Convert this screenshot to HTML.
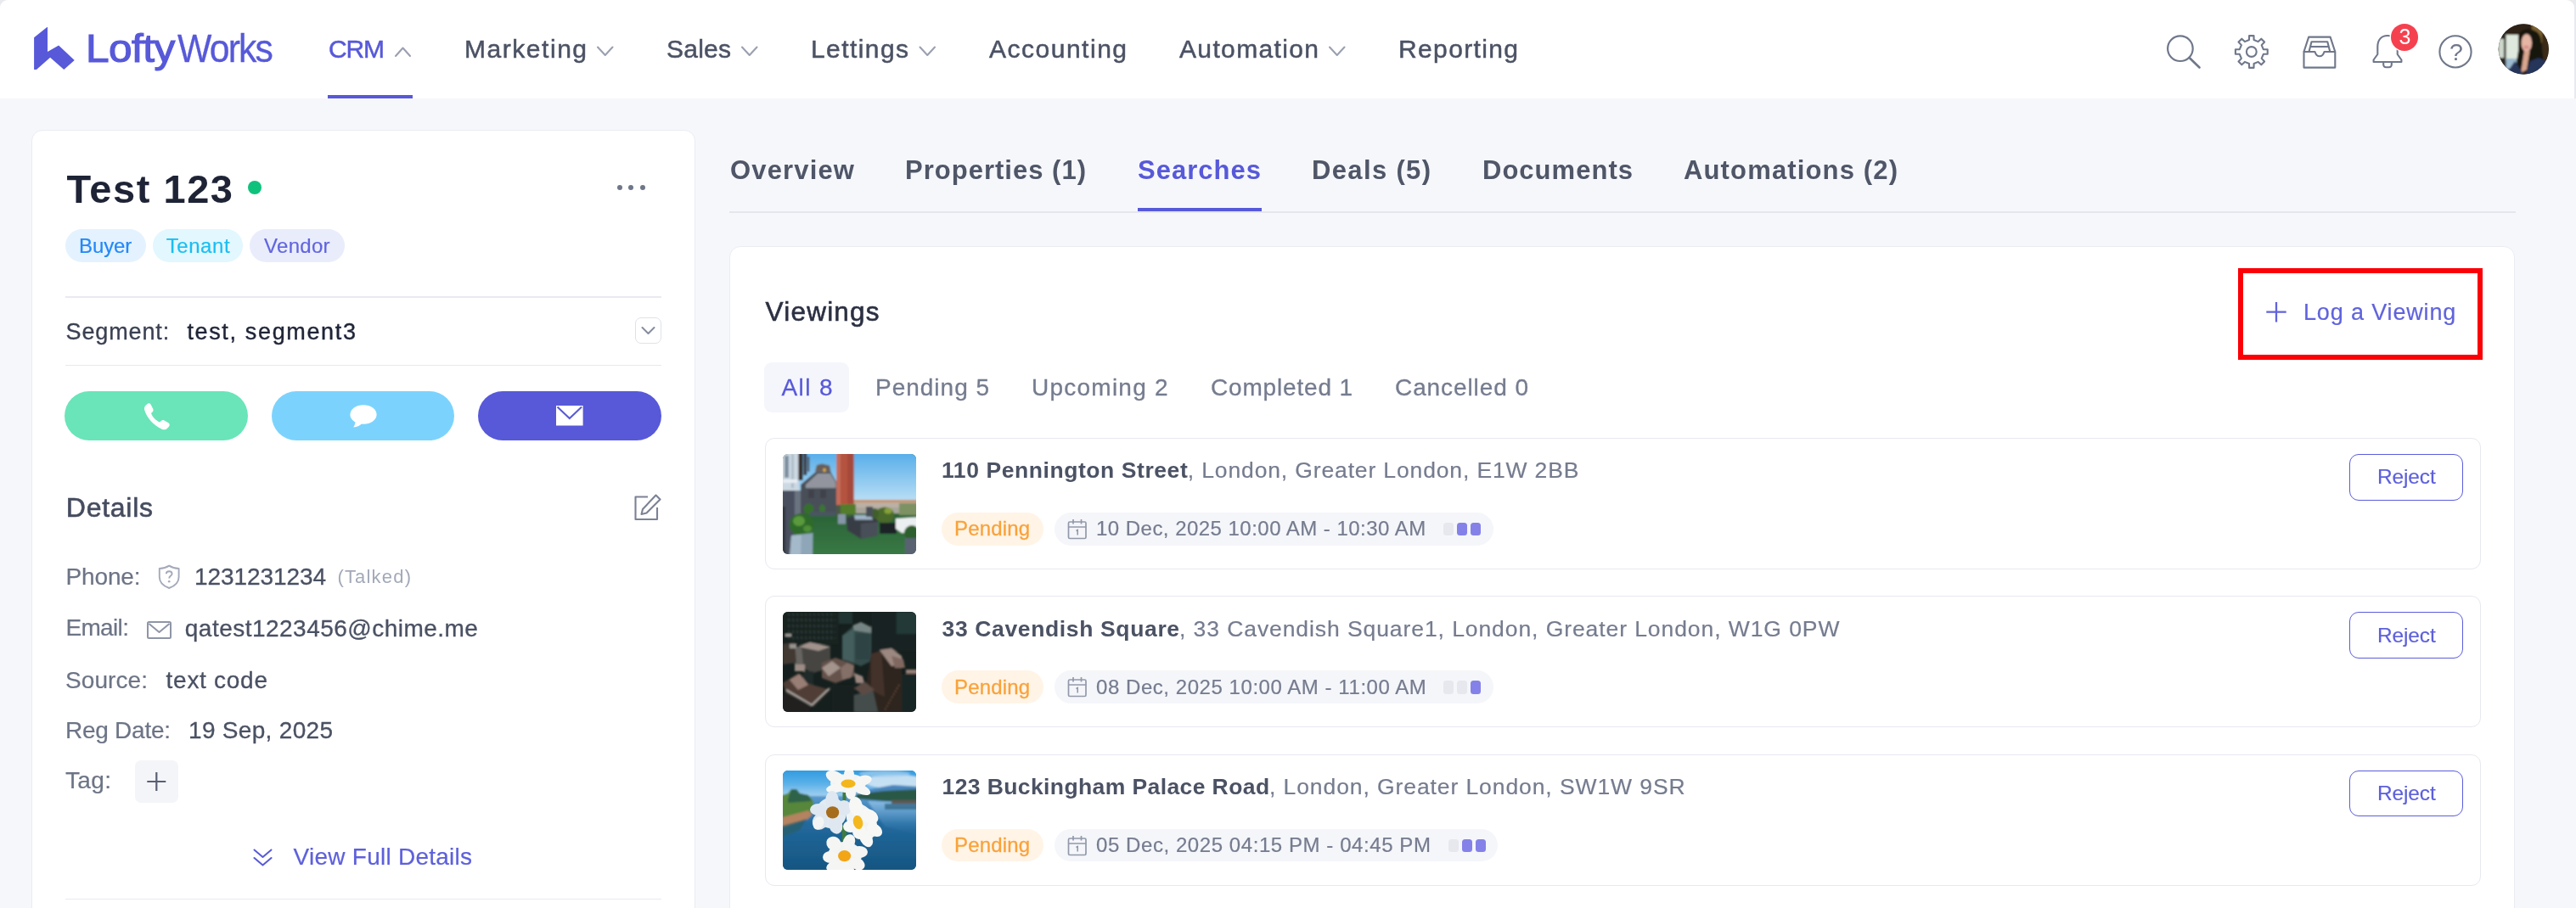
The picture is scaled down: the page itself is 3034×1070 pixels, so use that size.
<!DOCTYPE html>
<html lang="en"><head><meta charset="utf-8"><title>LoftyWorks CRM - Test 123 - Searches</title>
<style>
html,body{margin:0;padding:0}
body{width:3034px;height:1070px;position:relative;overflow:hidden;background:#f6f7fb;font-family:"Liberation Sans",sans-serif}
.abs,.t,svg{position:absolute}
.t{white-space:pre;line-height:1;display:block}
.card{position:absolute;background:#fff;border:1.5px solid #eaecf3;box-sizing:border-box}
.hr{position:absolute;height:1.6px;background:#e8eaf1}
.pill{position:absolute;border-radius:20px}
.vcard{position:absolute;left:900.5px;width:2021.5px;height:155px;border:1.5px solid #e7e9f0;border-radius:11px;box-sizing:border-box;background:#fff}
.thumb{position:absolute;left:921.5px;width:157.5px;height:117.6px;border-radius:6px;overflow:hidden}
.btn{position:absolute;top:460.5px;width:215.8px;height:58.8px;border-radius:30px}
.reject{position:absolute;left:2767px;width:133.5px;height:54.6px;border:1.8px solid #5b5ddb;border-radius:11px;box-sizing:border-box;background:#fff}
.dot{position:absolute;width:12px;height:15.5px;border-radius:3.5px}
#app{position:absolute;left:0;top:0;width:3034px;height:1070px;overflow:hidden;filter:blur(0.55px)}

</style></head>
<body>
<div id="app">
<div class="abs" style="left:0;top:0;width:3034px;height:115.5px;background:#e9eaee"></div>
<div class="abs" style="left:0;top:0;width:3032px;height:115.5px;background:#fff;border-radius:9px 9px 0 0"></div>
<svg style="left:0;top:0" width="340" height="115" viewBox="0 0 340 115"><polygon fill="#5759d9" points="40.1,44.2 55.4,32.1 56,32.1 56,60.9 69.1,53.5 87.7,70.9 75.3,82 59.1,67.8 43,82 40.1,82"/></svg>
<div class="abs" style="left:386px;top:111.5px;width:100px;height:4px;background:#5759d9"></div>
<svg style="left:0;top:0" width="1700" height="115" viewBox="0 0 1700 115"><polyline fill="none" stroke="#9aa0b0" stroke-width="2.1" stroke-linecap="round" stroke-linejoin="round" points="466,66 474.5,56.5 483,66"/><polyline fill="none" stroke="#9aa0b0" stroke-width="2.1" stroke-linecap="round" stroke-linejoin="round" points="704,55.5 712.75,65 721.5,55.5"/><polyline fill="none" stroke="#9aa0b0" stroke-width="2.1" stroke-linecap="round" stroke-linejoin="round" points="874,55.5 882.75,65 891.5,55.5"/><polyline fill="none" stroke="#9aa0b0" stroke-width="2.1" stroke-linecap="round" stroke-linejoin="round" points="1083.5,55.5 1092.25,65 1101.0,55.5"/><polyline fill="none" stroke="#9aa0b0" stroke-width="2.1" stroke-linecap="round" stroke-linejoin="round" points="1566,55.5 1574.75,65 1583.5,55.5"/></svg>
<svg style="left:0;top:0" width="3034" height="115" viewBox="0 0 3034 115"><circle cx="2567.9" cy="57.2" r="14.8" fill="none" stroke="#6f778a" stroke-width="2.2"/><line x1="2578.6" y1="68" x2="2590.5" y2="79.5" stroke="#6f778a" stroke-width="2.6" stroke-linecap="round"/><path d="M2649.0,47.0 L2649.1,42.1 L2654.5,42.1 L2654.6,47.0 L2659.7,49.1 L2663.3,45.7 L2667.1,49.5 L2663.7,53.1 L2665.8,58.2 L2670.7,58.3 L2670.7,63.7 L2665.8,63.8 L2663.7,68.9 L2667.1,72.5 L2663.3,76.3 L2659.7,72.9 L2654.6,75.0 L2654.5,79.9 L2649.1,79.9 L2649.0,75.0 L2643.9,72.9 L2640.3,76.3 L2636.5,72.5 L2639.9,68.9 L2637.8,63.8 L2632.9,63.7 L2632.9,58.3 L2637.8,58.2 L2639.9,53.1 L2636.5,49.5 L2640.3,45.7 L2643.9,49.1Z" fill="none" stroke="#6f778a" stroke-width="2.1" stroke-linejoin="round"/><circle cx="2651.8" cy="61.0" r="5.9" fill="none" stroke="#6f778a" stroke-width="2.1"/><g fill="none" stroke="#6f778a" stroke-width="2.1" stroke-linejoin="round"><path d="M2713.5,61 H2726.5 C2727.5,64.5 2729,66.3 2732,66.3 C2735,66.3 2736.5,64.5 2737.5,61 H2750.3 V79.6 H2713.5 Z"/><path d="M2713.5,61 L2719.2,43.6 H2744.6 L2750.3,61"/><path d="M2719.5,61 L2722.5,49.2 H2741.3 L2744.3,61"/><path d="M2721.5,55 H2742.3"/></g><g fill="none" stroke="#6f778a" stroke-width="2.1" stroke-linejoin="round"><path d="M2812,42 C2804.5,42 2800.3,47.5 2800.3,55 V64 L2795.6,70.5 V73 H2828.4 V70.5 L2823.7,64 V55 C2823.7,47.5 2819.5,42 2812,42 Z"/><path d="M2807.2,74 V76.3 C2807.2,78 2808.6,79.3 2810.2,79.3 H2813.8 C2815.4,79.3 2816.8,78 2816.8,76.3 V74"/></g><circle cx="2832" cy="43.9" r="17.5" fill="#fff"/><circle cx="2832" cy="43.9" r="16" fill="#f5414f"/><circle cx="2892" cy="60.9" r="18.6" fill="none" stroke="#6f778a" stroke-width="2.1"/><defs><clipPath id="av"><circle cx="2972.2" cy="57.9" r="29.7"/></clipPath><filter id="b1"><feGaussianBlur stdDeviation="1.1"/></filter></defs><circle cx="2972.2" cy="57.9" r="29.5" fill="#2a2017"/><g clip-path="url(#av)"><g filter="url(#b1)"><rect x="2940" y="25" width="66" height="66" fill="#2d2116"/><rect x="2982" y="26" width="14" height="24" fill="#7d6230"/><rect x="2994" y="34" width="10" height="40" fill="#3a2a18"/><rect x="2940" y="30" width="12" height="60" fill="#2b2a20"/><rect x="2951.5" y="41" width="15.5" height="30" fill="#dfe8dd"/><rect x="2951.5" y="69" width="15.5" height="12" fill="#9bb9cf"/><rect x="2942.5" y="46" width="6.5" height="22" fill="#cdd7ca"/><path d="M2966,44 C2966,30 2994,30 2993,50 L2996,74 L2988,80 L2962,84 L2966,60 Z" fill="#19120f"/><ellipse cx="2975.8" cy="50.5" rx="6.2" ry="10.6" fill="#e6b6a5"/><ellipse cx="2975.5" cy="55.5" rx="3.2" ry="2" fill="#d98f88"/><path d="M2973,60 L2979.5,60 L2976,82 L2969,86 Z" fill="#d9a68f"/><path d="M2948,92 L2962,72 L2970,84 L2974,90 L2980,72 L2990,68 L3003,74 L3004,92 Z" fill="#25355a"/></g></g></svg>
<div class="card" style="left:36.5px;top:152.6px;width:782.5px;height:940px;border-radius:13px"></div>
<div class="abs" style="left:291.7px;top:212.9px;width:16.3px;height:16.3px;border-radius:50%;background:#0fc27c"></div>
<div class="abs" style="left:726.8px;top:218px;width:6px;height:6px;border-radius:50%;background:#6f7688"></div>
<div class="abs" style="left:740.4px;top:218px;width:6px;height:6px;border-radius:50%;background:#6f7688"></div>
<div class="abs" style="left:754.0px;top:218px;width:6px;height:6px;border-radius:50%;background:#6f7688"></div>
<div class="pill" style="left:76.7px;top:270.1px;width:95.3px;height:39.3px;background:#e4f2ff"></div>
<div class="pill" style="left:180px;top:270.1px;width:106.4px;height:39.3px;background:#e2f7fe"></div>
<div class="pill" style="left:294px;top:270.1px;width:111.6px;height:39.3px;background:#e9edfb"></div>
<div class="hr" style="left:76.5px;top:349px;width:702px"></div>
<div class="hr" style="left:76.5px;top:429.5px;width:702px"></div>
<div class="hr" style="left:76.5px;top:1058.5px;width:702px"></div>
<div class="abs" style="left:747.5px;top:373.6px;width:31px;height:31px;border:1.5px solid #dfe2ea;border-radius:7px;box-sizing:border-box"></div>
<svg style="left:747.5px;top:373.6px" width="31" height="31" viewBox="0 0 31 31"><polyline points="8.5,12 15.5,19 22.5,12" fill="none" stroke="#858c9d" stroke-width="2" stroke-linecap="round" stroke-linejoin="round"/></svg>
<div class="btn" style="left:76.4px;background:#69e5b9"></div>
<div class="btn" style="left:319.5px;background:#7bd3fd"></div>
<div class="btn" style="left:562.8px;background:#5759d9"></div>
<svg style="left:168.6px;top:474.5px" width="32" height="32" viewBox="0 0 32 32"><path d="M4.2,1.2 C5.6,-0.2 8,0.2 8.8,1.9 L11.3,7 C11.9,8.3 11.6,9.7 10.6,10.6 L9,12.1 C10.6,16.4 14.3,20.6 19.2,22.6 L20.8,20.9 C21.8,19.9 23.3,19.7 24.5,20.4 L29.3,23.3 C30.9,24.3 31.2,26.5 29.9,27.8 L28,29.7 C26.3,31.4 23.7,31.7 21.6,30.7 C11.5,26.1 4.3,17.7 1.3,8.5 C0.6,6.4 1.1,4.2 2.6,2.8 Z" fill="#fff"/></svg>
<svg style="left:411.9px;top:476.8px" width="32" height="27" viewBox="0 0 32 27"><ellipse cx="16" cy="11.5" rx="15.6" ry="11.3" fill="#fff"/><path d="M6.5,17 C7,21 6,24 4.2,26.4 C9,26.2 12.5,24.4 14.5,21.5 Z" fill="#fff"/></svg>
<svg style="left:654.7px;top:478px" width="32" height="24" viewBox="0 0 32 24"><rect x="0" y="0" width="31.6" height="23.5" fill="#fff"/><polyline points="1.5,1.5 15.8,15 30.1,1.5" fill="none" stroke="#5759d9" stroke-width="2"/></svg>
<svg style="left:746px;top:580px" width="36" height="36" viewBox="0 0 36 36"><path d="M17,5.5 H2.5 V32 H28 V18" fill="none" stroke="#7b8294" stroke-width="2.1" stroke-linejoin="round"/><path d="M26.5,3.5 L31.5,8.5 L15.5,24.5 L9.5,26 L11,20 Z" fill="#fff" stroke="#7b8294" stroke-width="2.1" stroke-linejoin="round"/></svg>
<svg style="left:185px;top:664px" width="30" height="32" viewBox="0 0 30 32"><path d="M14.2,2.6 C10.5,5 6.5,5.8 2.8,6 V16 C2.8,22.5 8,26.8 14.2,29 C20.4,26.8 25.6,22.5 25.6,16 V6 C21.9,5.8 17.9,5 14.2,2.6 Z" fill="none" stroke="#a4aaba" stroke-width="1.9" stroke-linejoin="round"/><path d="M10.8,12.3 C10.8,10.3 12.3,9.2 14.2,9.2 C16.1,9.2 17.6,10.4 17.6,12.2 C17.6,14.6 14.2,14.6 14.2,17.6" fill="none" stroke="#a4aaba" stroke-width="1.9"/><circle cx="14.2" cy="21.3" r="1.3" fill="#a4aaba"/></svg>
<svg style="left:172px;top:730px" width="32" height="26" viewBox="0 0 32 26"><rect x="2" y="3" width="27" height="19" rx="1.5" fill="none" stroke="#8e95a6" stroke-width="2"/><polyline points="3.5,5 15.5,15 27.5,5" fill="none" stroke="#8e95a6" stroke-width="2" stroke-linejoin="round"/></svg>
<div class="abs" style="left:159px;top:896px;width:50.6px;height:50px;border-radius:7px;background:#f4f5f9"></div>
<svg style="left:159px;top:896px" width="51" height="50" viewBox="0 0 51 50"><path d="M25.3,14 V36 M14.3,25 H36.3" stroke="#596073" stroke-width="2.2" fill="none"/></svg>
<svg style="left:296px;top:997.2px" width="28" height="28" viewBox="0 0 28 28"><polyline points="3.5,4.5 13.5,13 23.5,4.5" fill="none" stroke="#5759d9" stroke-width="2" stroke-linejoin="round" stroke-linecap="round"/><polyline points="3.5,14 13.5,22.5 23.5,14" fill="none" stroke="#5759d9" stroke-width="2" stroke-linejoin="round" stroke-linecap="round"/></svg>
<div class="abs" style="left:859px;top:248.5px;width:2104px;height:2px;background:#e4e6ed"></div>
<div class="abs" style="left:1340px;top:244.5px;width:146px;height:4.5px;background:#5759d9"></div>
<div class="card" style="left:859.3px;top:290px;width:2103px;height:820px;border-radius:13px"></div>
<div class="abs" style="left:900px;top:427px;width:99.6px;height:58.5px;border-radius:9px;background:#f5f6fb"></div>
<div class="abs" style="left:2635.8px;top:316px;width:288.2px;height:108px;border:6.5px solid #fb0007;box-sizing:border-box"></div>
<svg style="left:2666px;top:353px" width="30" height="30" viewBox="0 0 30 30"><path d="M15,3 V26.5 M3.3,14.6 H26.7" stroke="#6063dc" stroke-width="2.3" fill="none"/></svg>
<div class="vcard" style="top:516.0px"></div>
<div class="pill" style="left:1108.5px;top:604.0px;width:120.5px;height:38.7px;background:#fff4e6"></div>
<div class="pill" style="left:1241.5px;top:604.0px;width:517.1px;height:38.7px;background:#f5f6fa"></div>
<svg style="left:1256px;top:610.0px" width="26" height="28" viewBox="0 0 26 28"><rect x="2.5" y="5" width="20.5" height="19.5" rx="1.5" fill="none" stroke="#9299aa" stroke-width="1.7"/><path d="M2.5,11 H23 M8,2 V7.5 M17.5,2 V7.5" stroke="#9299aa" stroke-width="1.7" fill="none"/><path d="M11.5,15.5 L13.2,14.5 V20.5" stroke="#8e95a6" stroke-width="1.5" fill="none"/></svg>
<div class="dot" style="left:1700.0px;top:615.7px;background:#e6e8ee"></div>
<div class="dot" style="left:1715.9px;top:615.7px;background:#8482e8"></div>
<div class="dot" style="left:1731.8px;top:615.7px;background:#8482e8"></div>
<div class="reject" style="top:535.0px"></div>
<div class="vcard" style="top:702.4px"></div>
<div class="pill" style="left:1108.5px;top:790.4px;width:120.5px;height:38.7px;background:#fff4e6"></div>
<div class="pill" style="left:1241.5px;top:790.4px;width:517.1px;height:38.7px;background:#f5f6fa"></div>
<svg style="left:1256px;top:796.4px" width="26" height="28" viewBox="0 0 26 28"><rect x="2.5" y="5" width="20.5" height="19.5" rx="1.5" fill="none" stroke="#9299aa" stroke-width="1.7"/><path d="M2.5,11 H23 M8,2 V7.5 M17.5,2 V7.5" stroke="#9299aa" stroke-width="1.7" fill="none"/><path d="M11.5,15.5 L13.2,14.5 V20.5" stroke="#8e95a6" stroke-width="1.5" fill="none"/></svg>
<div class="dot" style="left:1700.0px;top:802.1px;background:#e6e8ee"></div>
<div class="dot" style="left:1715.9px;top:802.1px;background:#e6e8ee"></div>
<div class="dot" style="left:1731.8px;top:802.1px;background:#8482e8"></div>
<div class="reject" style="top:721.4px"></div>
<div class="vcard" style="top:888.8px"></div>
<div class="pill" style="left:1108.5px;top:976.8px;width:120.5px;height:38.7px;background:#fff4e6"></div>
<div class="pill" style="left:1241.5px;top:976.8px;width:522.5px;height:38.7px;background:#f5f6fa"></div>
<svg style="left:1256px;top:982.8px" width="26" height="28" viewBox="0 0 26 28"><rect x="2.5" y="5" width="20.5" height="19.5" rx="1.5" fill="none" stroke="#9299aa" stroke-width="1.7"/><path d="M2.5,11 H23 M8,2 V7.5 M17.5,2 V7.5" stroke="#9299aa" stroke-width="1.7" fill="none"/><path d="M11.5,15.5 L13.2,14.5 V20.5" stroke="#8e95a6" stroke-width="1.5" fill="none"/></svg>
<div class="dot" style="left:1705.7px;top:988.5px;background:#e6e8ee"></div>
<div class="dot" style="left:1721.6px;top:988.5px;background:#8482e8"></div>
<div class="dot" style="left:1737.5px;top:988.5px;background:#8482e8"></div>
<div class="reject" style="top:907.8px"></div>
<div class="thumb" style="top:535.0px"><svg width="158" height="118" viewBox="0 0 158 118" style="left:0;top:0"><defs><linearGradient id="sky1" x1="0" y1="0" x2="0" y2="1"><stop offset="0" stop-color="#52abe9"/><stop offset="1" stop-color="#bfe1f6"/></linearGradient><linearGradient id="gr1" x1="0" y1="0" x2="0" y2="1"><stop offset="0" stop-color="#2a6236"/><stop offset="1" stop-color="#3a7b47"/></linearGradient><filter id="bl"><feGaussianBlur stdDeviation="0.8"/></filter></defs><rect width="158" height="118" fill="#4a6a55"/><g filter="url(#bl)"><rect x="-4" y="-4" width="166" height="62" fill="url(#sky1)"/><rect x="83" y="54" width="80" height="22" fill="#a9a59a"/><rect x="83" y="54" width="80" height="3" fill="#c9935f"/><rect x="83" y="57" width="80" height="6" fill="#bcb0a6"/><rect x="-4" y="70" width="166" height="52" fill="url(#gr1)"/><rect x="-4" y="-4" width="23" height="48" fill="#ccd8e2"/><rect x="2" y="2" width="5" height="26" fill="#7e90a0"/><rect x="10" y="0" width="3" height="40" fill="#aebdca"/><rect x="0" y="30" width="17" height="4" fill="#e8eef3"/><rect x="18.5" y="-2" width="5" height="33" fill="#2f2621"/><rect x="24.6" y="-2" width="3.6" height="27" fill="#3a2b24"/><rect x="29.2" y="3" width="2" height="18" fill="#4a3a31"/><polygon points="21,36 39.5,20.5 56,20.5 63,33 63,72 21,72" fill="#4a4f59"/><polygon points="27,36 41,23 56,23 62.5,34 62.5,40 27,40" fill="#92959d"/><polygon points="38,20.5 40,13 46,11.5 55,13.5 56.5,20.5" fill="#6b5e59"/><rect x="47.5" y="17" width="3" height="4" fill="#e0a94a"/><rect x="30" y="42" width="7" height="10" fill="#3f434c"/><rect x="44" y="42" width="7" height="10" fill="#3f434c"/><rect x="63" y="-4" width="20.5" height="65" fill="#b4523f"/><rect x="63" y="-4" width="5" height="65" fill="#c46a58"/><rect x="76" y="-4" width="7.5" height="65" fill="#a64a3a"/><rect x="63" y="60" width="21" height="12" fill="#4b5a45"/><rect x="-4" y="43" width="18.5" height="80" fill="#48505e"/><rect x="-4" y="62" width="7" height="56" fill="#2f3540"/><rect x="14" y="43" width="7" height="30" fill="#6b7380"/><ellipse cx="30.5" cy="65" rx="6" ry="6.5" fill="#346f2c"/><ellipse cx="46.5" cy="64.5" rx="3.5" ry="5" fill="#3a7530"/><rect x="32" y="68" width="30" height="5" fill="#4a5560"/><ellipse cx="22" cy="83" rx="14.5" ry="13" fill="#2f6a2a"/><ellipse cx="19" cy="79" rx="7" ry="6" fill="#5a9a3e"/><ellipse cx="29" cy="88" rx="5" ry="4" fill="#4f8f38"/><polygon points="10,96 35.5,93 35,122 8,122" fill="#8ea6b8"/><polygon points="10,96 22,95 21,122 8,122" fill="#a4b9c9"/><rect x="65" y="71" width="9" height="11.5" fill="#8796a8"/><rect x="68" y="59" width="18" height="12" fill="#527d2c"/><polygon points="75,75 84,73 104,73 112,77 112,96 92,100 76,90" fill="#383c45"/><polygon points="84,72 104,72 106,77.5 85,77.5" fill="#9fb4c8"/><polygon points="92,82 112,80 112,96 92,100" fill="#4a4f59"/><ellipse cx="120" cy="72" rx="11" ry="9.5" fill="#4a6b2a"/><ellipse cx="124" cy="67" rx="4.5" ry="3.5" fill="#85a03a"/><ellipse cx="108" cy="70" rx="5" ry="6" fill="#3f5f2c"/><rect x="98" y="62" width="8" height="12" fill="#4a4f58"/><rect x="137" y="58" width="26" height="14" fill="#7d9163"/><rect x="114" y="81" width="20" height="13" fill="#1f2226"/><polygon points="133,76 162,74 162,92 140,93 133,88" fill="#eceff1"/><ellipse cx="152" cy="93" rx="9" ry="9" fill="#2f5f2e"/><rect x="144" y="99" width="18" height="23" fill="#596270"/></g></svg></div>
<div class="thumb" style="top:721.4px"><svg width="158" height="118" viewBox="0 0 158 118" style="left:0;top:0"><defs><filter id="bl2"><feGaussianBlur stdDeviation="1.0"/></filter><pattern id="win" width="5" height="7" patternUnits="userSpaceOnUse"><rect x="1.5" y="1" width="1.3" height="3.5" fill="#4b5f5c" opacity="0.8"/></pattern></defs><rect width="158" height="118" fill="#18221f"/><g filter="url(#bl2)"><rect x="0" y="0" width="66" height="38" fill="#1a2624"/><rect x="4" y="2" width="58" height="34" fill="url(#win)"/><rect x="104" y="0" width="54" height="46" fill="#1a2826"/><rect x="134" y="0" width="24" height="26" fill="#2c4644"/><rect x="66" y="0" width="16" height="14" fill="#2b3f3d"/><polygon points="70,28 84,16 104,22 104,58 92,64 70,56" fill="#446160"/><polygon points="70,28 84,20 84,60 70,56" fill="#5a7b7a"/><polygon points="82.5,16 92,12 104,18 104,25 84,22" fill="#a3b4b0"/><rect x="86" y="26" width="16" height="30" fill="#3b5756"/><polygon points="14,42 32,36 56,41 56,66 36,72 14,62" fill="#5d5853"/><polygon points="18,41 32,36 56,41 42,46" fill="#e0c6bd"/><polygon points="14,42 22,41 24,62 14,62" fill="#8d8580"/><polygon points="0,38 14,36 16,60 0,62" fill="#57463e"/><rect x="3" y="26" width="7" height="3" fill="#d9cfc8"/><rect x="8" y="38" width="8" height="5" fill="#d0c8c2"/><polygon points="46,60 62,54 84,62 84,76 62,84 46,78" fill="#8a6a60"/><polygon points="46,66 58,58 68,66 54,76" fill="#e2c9be"/><polygon points="68,66 76,60 84,64 80,78 70,80" fill="#b8958a"/><polygon points="84,72 94,76 96,84 86,84" fill="#d9b8ad"/><rect x="14" y="62" width="12" height="8" fill="#d8bdb3"/><rect x="24" y="70" width="12" height="20" fill="#253331"/><polygon points="0,84 18,72 28,84 56,92 36,112 4,96" fill="#6a4d42"/><polygon points="8,80 20,73 30,86 18,92" fill="#d3a99c"/><polyline points="4,92 34,110 55,90" fill="none" stroke="#e6dad4" stroke-width="2.2"/><polygon points="0,96 34,112 30,118 0,118" fill="#2a2422"/><polygon points="104,48 122,44 140,54 140,118 112,118 98,88" fill="#3b2a24"/><polygon points="104,50 116,46 120,100 104,92" fill="#5a3d33"/><polygon points="114,45 128,43 140,52 142,62 128,64" fill="#d9b8ad"/><polygon points="128,52 142,56 144,66 132,66" fill="#b08a7e"/><rect x="145" y="68" width="13" height="5" fill="#d2ab9e"/><rect x="140" y="74" width="18" height="44" fill="#1b2b2a"/><line x1="137" y1="86" x2="120" y2="116" stroke="#a0684f" stroke-width="1.5" stroke-dasharray="1.5 2.5"/><polygon points="84,98 106,92 112,118 84,118" fill="#5c6362"/><polygon points="84,90 96,82 108,92 94,98" fill="#7d6156"/><rect x="58" y="86" width="26" height="32" fill="#1d2422"/></g><rect width="158" height="118" fill="#121c1a" opacity="0.3"/></svg></div>
<div class="thumb" style="top:907.8px"><svg width="158" height="118" viewBox="0 0 158 118" style="left:0;top:0"><defs><linearGradient id="sky3" x1="0" y1="0" x2="0" y2="1"><stop offset="0" stop-color="#2696de"/><stop offset="0.5" stop-color="#59b0e8"/><stop offset="1" stop-color="#b5d8f1"/></linearGradient><linearGradient id="wat" x1="0" y1="0" x2="0" y2="1"><stop offset="0" stop-color="#5b9bd0"/><stop offset="0.35" stop-color="#22699d"/><stop offset="1" stop-color="#15547f"/></linearGradient><linearGradient id="wat2" x1="0" y1="0" x2="0" y2="1"><stop offset="0" stop-color="#8fc0e6" stop-opacity="0.9"/><stop offset="1" stop-color="#3f86be" stop-opacity="0"/></linearGradient><filter id="bl3"><feGaussianBlur stdDeviation="1.1"/></filter><filter id="bl3b"><feGaussianBlur stdDeviation="0.7"/></filter></defs><rect width="158" height="118" fill="#1f6596"/><g filter="url(#bl3)"><rect x="-4" y="-4" width="166" height="38" fill="url(#sky3)"/><ellipse cx="132" cy="13" rx="36" ry="8" fill="#d9e9f5" opacity="0.85"/><ellipse cx="120" cy="4" rx="30" ry="4" fill="#a8d0ee" opacity="0.7"/><polygon points="92,24 130,17 162,19 162,30 92,30" fill="#4a86bd"/><rect x="-4" y="30" width="166" height="92" fill="url(#wat)"/><polygon points="100,36 162,38 162,76 120,66" fill="url(#wat2)"/><polygon points="86,28 120,24 162,22 162,37 120,36 86,33" fill="#2b5846"/><rect x="128" y="35" width="34" height="4" fill="#5f5852"/><rect x="120" y="39" width="42" height="7" fill="#2a5f7c" opacity="0.7"/><rect x="-4" y="29" width="34" height="5" fill="#245a7c"/><polygon points="-4,30 6,27 10,22 16,22 20,27 30,29 36,36 36,46 28,56 -4,66" fill="#57873a"/><polygon points="6,34 10,22 16,22 20,27 30,29 34,36 6,38" fill="#2f624a"/><polygon points="-4,56 30,47 35,52 28,58 -4,69" fill="#b5835f"/><polygon points="-4,66 28,57 20,70 -4,80" fill="#2a5f6c" opacity="0.8"/></g><g filter="url(#bl3b)"><rect x="70.5" y="22" width="4" height="16" fill="#3f7a3a"/><rect x="70" y="64" width="5" height="22" fill="#3f7a3a"/><g fill="#f1f4f4"><ellipse cx="77" cy="15" rx="21" ry="11"/><ellipse cx="57" cy="50" rx="18" ry="18" fill="#e3ebf2"/><ellipse cx="93" cy="60" rx="16" ry="23" transform="rotate(-32 93 60)"/><ellipse cx="73" cy="100" rx="20" ry="16"/></g><g fill="#f6f7f5"><ellipse cx="62" cy="8" rx="12" ry="7" transform="rotate(25 62 8)"/><ellipse cx="78" cy="5" rx="6" ry="9"/><ellipse cx="94" cy="12" rx="11" ry="6" transform="rotate(-15 94 12)"/><ellipse cx="62" cy="21" rx="11" ry="5" transform="rotate(-10 62 21)"/><ellipse cx="92" cy="22" rx="12" ry="5.5" transform="rotate(25 92 22)"/><ellipse cx="80" cy="26" rx="6" ry="8"/></g><ellipse cx="77" cy="15.5" rx="8.5" ry="5" fill="#f3b61f"/><g fill="#dfe8f1"><ellipse cx="58" cy="36" rx="8" ry="12"/><ellipse cx="42" cy="46" rx="10" ry="7"/><ellipse cx="44" cy="60" rx="9" ry="10" transform="rotate(30 44 60)"/><ellipse cx="62" cy="64" rx="8" ry="11" transform="rotate(-20 62 64)"/><ellipse cx="72" cy="44" rx="9" ry="9"/></g><g fill="#f3f5f4"><ellipse cx="42" cy="62" rx="6" ry="8" transform="rotate(25 42 62)"/></g><ellipse cx="58.6" cy="49.4" rx="7.6" ry="7.2" fill="#a66d1c"/><g fill="#f7f8f6"><ellipse cx="86" cy="42" rx="8" ry="11" transform="rotate(-10 86 42)"/><ellipse cx="102" cy="54" rx="11" ry="8" transform="rotate(30 102 54)"/><ellipse cx="108" cy="70" rx="10" ry="7" transform="rotate(35 108 70)"/><ellipse cx="98" cy="80" rx="7" ry="11" transform="rotate(-30 98 80)"/><ellipse cx="80" cy="66" rx="9" ry="7"/><ellipse cx="90" cy="72" rx="8" ry="9"/></g><ellipse cx="88.5" cy="61" rx="5.6" ry="8.2" fill="#f4b81f" transform="rotate(-15 88.5 61)"/><g fill="#f5f6f4"><ellipse cx="60" cy="86" rx="9" ry="8" transform="rotate(30 60 86)"/><ellipse cx="78" cy="84" rx="7" ry="9" transform="rotate(20 78 84)"/><ellipse cx="90" cy="96" rx="10" ry="7"/><ellipse cx="56" cy="102" rx="9" ry="7"/><ellipse cx="60" cy="113" rx="9" ry="6" transform="rotate(-20 60 113)"/><ellipse cx="88" cy="110" rx="9" ry="7" transform="rotate(30 88 110)"/><ellipse cx="74" cy="116" rx="10" ry="7"/></g><ellipse cx="72.6" cy="100.6" rx="7.6" ry="6.6" fill="#f2a519"/></g></svg></div>
<div id="texts">
<span class="t" style="left:100.5px;top:34.1px;font-size:46px;letter-spacing:-0.50px;color:#5759d9;transform:scaleX(1.0774);transform-origin:0 0;-webkit-text-stroke:1.2px #5759d9;">Lofty</span>
<span class="t" style="left:208.6px;top:34.1px;font-size:46px;letter-spacing:-2.00px;color:#5759d9;transform:scaleX(0.9292);transform-origin:0 0;-webkit-text-stroke:0.3px #5759d9;">Works</span>
<span class="t" style="left:387.0px;top:42.5px;font-size:30px;letter-spacing:-1.16px;color:#5759d9;-webkit-text-stroke:0.5px #5759d9;">CRM</span>
<span class="t" style="left:547.0px;top:42.5px;font-size:30px;letter-spacing:1.54px;color:#4b5264;-webkit-text-stroke:0.5px #4b5264;">Marketing</span>
<span class="t" style="left:785.0px;top:42.5px;font-size:30px;letter-spacing:0.24px;color:#4b5264;-webkit-text-stroke:0.5px #4b5264;">Sales</span>
<span class="t" style="left:955.0px;top:42.5px;font-size:30px;letter-spacing:1.42px;color:#4b5264;-webkit-text-stroke:0.5px #4b5264;">Lettings</span>
<span class="t" style="left:1165.0px;top:42.5px;font-size:30px;letter-spacing:1.51px;color:#4b5264;-webkit-text-stroke:0.5px #4b5264;">Accounting</span>
<span class="t" style="left:1389.0px;top:42.5px;font-size:30px;letter-spacing:1.36px;color:#4b5264;-webkit-text-stroke:0.5px #4b5264;">Automation</span>
<span class="t" style="left:1647.0px;top:42.5px;font-size:30px;letter-spacing:1.37px;color:#4b5264;-webkit-text-stroke:0.5px #4b5264;">Reporting</span>
<span class="t" style="left:860.0px;top:185.3px;font-size:31px;letter-spacing:1.16px;color:#4f5668;font-weight:700;">Overview</span>
<span class="t" style="left:1066.0px;top:185.3px;font-size:31px;letter-spacing:1.01px;color:#4f5668;font-weight:700;">Properties (1)</span>
<span class="t" style="left:1340.0px;top:185.3px;font-size:31px;letter-spacing:1.02px;color:#5759d9;font-weight:700;">Searches</span>
<span class="t" style="left:1545.0px;top:185.3px;font-size:31px;letter-spacing:1.35px;color:#4f5668;font-weight:700;">Deals (5)</span>
<span class="t" style="left:1746.0px;top:185.3px;font-size:31px;letter-spacing:1.02px;color:#4f5668;font-weight:700;">Documents</span>
<span class="t" style="left:1983.0px;top:185.3px;font-size:31px;letter-spacing:1.15px;color:#4f5668;font-weight:700;">Automations (2)</span>
<span class="t" style="left:78.5px;top:199.2px;font-size:47px;letter-spacing:1.55px;color:#1e2336;font-weight:700;">Test 123</span>
<span class="t" style="left:93.1px;top:277.7px;font-size:24px;letter-spacing:-0.15px;color:#2389f8;-webkit-text-stroke:0.2px #2389f8;">Buyer</span>
<span class="t" style="left:195.7px;top:277.7px;font-size:24px;letter-spacing:0.57px;color:#19bef2;-webkit-text-stroke:0.2px #19bef2;">Tenant</span>
<span class="t" style="left:311.0px;top:277.7px;font-size:24px;letter-spacing:0.30px;color:#6265df;-webkit-text-stroke:0.2px #6265df;">Vendor</span>
<span class="t" style="left:77.6px;top:377.6px;font-size:27px;letter-spacing:0.86px;color:#3a4052;-webkit-text-stroke:0.3px #3a4052;">Segment:</span>
<span class="t" style="left:220.4px;top:377.6px;font-size:27px;letter-spacing:1.65px;color:#1f2437;-webkit-text-stroke:0.4px #1f2437;">test, segment3</span>
<span class="t" style="left:77.8px;top:582.4px;font-size:32px;letter-spacing:0.73px;color:#454c5f;-webkit-text-stroke:0.6px #454c5f;">Details</span>
<span class="t" style="left:77.4px;top:666.3px;font-size:28px;letter-spacing:-0.11px;color:#6c7486;-webkit-text-stroke:0.2px #6c7486;">Phone:</span>
<span class="t" style="left:229.0px;top:666.3px;font-size:28px;letter-spacing:-0.06px;color:#4a5163;-webkit-text-stroke:0.3px #4a5163;">1231231234</span>
<span class="t" style="left:397.4px;top:668.6px;font-size:22px;letter-spacing:1.19px;color:#a3a9b8;">(Talked)</span>
<span class="t" style="left:77.4px;top:725.5px;font-size:28px;letter-spacing:-0.64px;color:#6c7486;-webkit-text-stroke:0.2px #6c7486;">Email:</span>
<span class="t" style="left:217.8px;top:726.5px;font-size:28px;letter-spacing:0.48px;color:#4a5163;-webkit-text-stroke:0.3px #4a5163;">qatest1223456@chime.me</span>
<span class="t" style="left:77.0px;top:787.7px;font-size:28px;letter-spacing:0.08px;color:#6c7486;-webkit-text-stroke:0.2px #6c7486;">Source:</span>
<span class="t" style="left:195.6px;top:787.7px;font-size:28px;letter-spacing:0.72px;color:#4a5163;-webkit-text-stroke:0.3px #4a5163;">text code</span>
<span class="t" style="left:77.0px;top:846.8px;font-size:28px;letter-spacing:-0.26px;color:#6c7486;-webkit-text-stroke:0.2px #6c7486;">Reg Date:</span>
<span class="t" style="left:222.0px;top:846.8px;font-size:28px;letter-spacing:0.31px;color:#4a5163;-webkit-text-stroke:0.3px #4a5163;">19 Sep, 2025</span>
<span class="t" style="left:77.0px;top:906.3px;font-size:28px;letter-spacing:0.35px;color:#6c7486;-webkit-text-stroke:0.2px #6c7486;">Tag:</span>
<span class="t" style="left:345.6px;top:996.3px;font-size:28px;letter-spacing:0.25px;color:#5d60db;-webkit-text-stroke:0.2px #5d60db;">View Full Details</span>
<span class="t" style="left:901.5px;top:351.7px;font-size:31.5px;letter-spacing:1.23px;color:#2b3042;-webkit-text-stroke:0.6px #2b3042;">Viewings</span>
<span class="t" style="left:920.5px;top:443.3px;font-size:28px;letter-spacing:1.41px;color:#5759d9;-webkit-text-stroke:0.3px #5759d9;">All 8</span>
<span class="t" style="left:1031.0px;top:443.3px;font-size:28px;letter-spacing:0.99px;color:#757c8f;-webkit-text-stroke:0.3px #757c8f;">Pending 5</span>
<span class="t" style="left:1215.0px;top:443.3px;font-size:28px;letter-spacing:1.24px;color:#757c8f;-webkit-text-stroke:0.3px #757c8f;">Upcoming 2</span>
<span class="t" style="left:1426.0px;top:443.3px;font-size:28px;letter-spacing:0.82px;color:#757c8f;-webkit-text-stroke:0.3px #757c8f;">Completed 1</span>
<span class="t" style="left:1643.0px;top:443.3px;font-size:28px;letter-spacing:0.91px;color:#757c8f;-webkit-text-stroke:0.3px #757c8f;">Cancelled 0</span>
<span class="t" style="left:2713.0px;top:355.4px;font-size:27px;letter-spacing:0.85px;color:#6063dc;-webkit-text-stroke:0.2px #6063dc;">Log a Viewing</span>
<span class="t" style="left:1109.0px;top:541.3px;font-size:26.5px;letter-spacing:0.57px;color:#4b5264;font-weight:700;">110 Pennington Street</span>
<span class="t" style="left:1398.8px;top:541.3px;font-size:26.5px;letter-spacing:0.86px;color:#757c8f;-webkit-text-stroke:0.2px #757c8f;">, London, Greater London, E1W 2BB</span>
<span class="t" style="left:1124.0px;top:611.4px;font-size:24px;letter-spacing:0.15px;color:#f9a23b;-webkit-text-stroke:0.3px #f9a23b;">Pending</span>
<span class="t" style="left:1291.0px;top:611.4px;font-size:24px;letter-spacing:0.47px;color:#757c8f;-webkit-text-stroke:0.2px #757c8f;">10 Dec, 2025 10:00 AM - 10:30 AM</span>
<span class="t" style="left:2800.0px;top:550.3px;font-size:24.5px;letter-spacing:-0.15px;color:#5d60db;-webkit-text-stroke:0.15px #5d60db;">Reject</span>
<span class="t" style="left:1109.5px;top:727.7px;font-size:26.5px;letter-spacing:0.64px;color:#4b5264;font-weight:700;">33 Cavendish Square</span>
<span class="t" style="left:1389.0px;top:727.7px;font-size:26.5px;letter-spacing:0.92px;color:#757c8f;-webkit-text-stroke:0.2px #757c8f;">, 33 Cavendish Square1, London, Greater London, W1G 0PW</span>
<span class="t" style="left:1124.0px;top:797.8px;font-size:24px;letter-spacing:0.15px;color:#f9a23b;-webkit-text-stroke:0.3px #f9a23b;">Pending</span>
<span class="t" style="left:1291.0px;top:797.8px;font-size:24px;letter-spacing:0.55px;color:#757c8f;-webkit-text-stroke:0.2px #757c8f;">08 Dec, 2025 10:00 AM - 11:00 AM</span>
<span class="t" style="left:2800.0px;top:736.7px;font-size:24.5px;letter-spacing:-0.15px;color:#5d60db;-webkit-text-stroke:0.15px #5d60db;">Reject</span>
<span class="t" style="left:1109.5px;top:914.1px;font-size:26.5px;letter-spacing:0.40px;color:#4b5264;font-weight:700;">123 Buckingham Palace Road</span>
<span class="t" style="left:1495.0px;top:914.1px;font-size:26.5px;letter-spacing:0.91px;color:#757c8f;-webkit-text-stroke:0.2px #757c8f;">, London, Greater London, SW1W 9SR</span>
<span class="t" style="left:1124.0px;top:984.2px;font-size:24px;letter-spacing:0.15px;color:#f9a23b;-webkit-text-stroke:0.3px #f9a23b;">Pending</span>
<span class="t" style="left:1291.0px;top:984.2px;font-size:24px;letter-spacing:0.57px;color:#757c8f;-webkit-text-stroke:0.2px #757c8f;">05 Dec, 2025 04:15 PM - 04:45 PM</span>
<span class="t" style="left:2800.0px;top:923.1px;font-size:24.5px;letter-spacing:-0.15px;color:#5d60db;-webkit-text-stroke:0.15px #5d60db;">Reject</span>
<span class="t" style="left:2825.5px;top:31.4px;font-size:25px;letter-spacing:0.00px;color:#ffffff;">3</span>
<span class="t" style="left:2885.0px;top:47.3px;font-size:28.5px;letter-spacing:0.00px;color:#6f778a;">?</span>
</div>
</div>
</body></html>
